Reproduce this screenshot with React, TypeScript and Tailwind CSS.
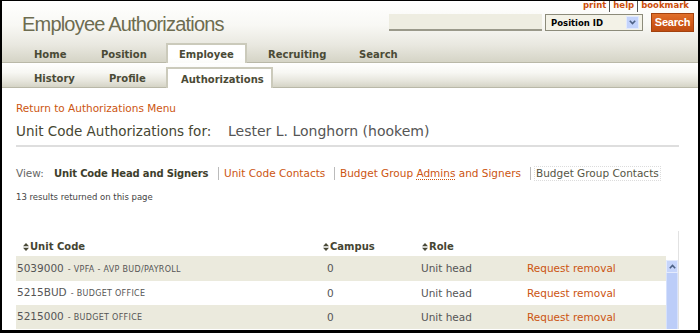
import React from "react";

function SortIcon() {
  return (
    <svg width="6" height="8" viewBox="0 0 6 8" className="inline-block mr-[1px]">
      <path d="M3 0 L6 3.3 L0 3.3 Z" fill="#4a4a38" />
      <path d="M3 8 L6 4.7 L0 4.7 Z" fill="#4a4a38" />
    </svg>
  );
}

function Sep() {
  return <span className="inline-block w-px h-[13px] bg-[#555] mx-[3px]" />;
}

function VSep() {
  return <span className="inline-block w-px h-[13px] bg-[#bbbbbb]" />;
}

const rows = [
  { code: "5039000", name: "- VPFA - AVP BUD/PAYROLL", bg: "bg-[#ebeadd]", h: "h-[25px]" },
  { code: "5215BUD", name: "- BUDGET OFFICE", bg: "bg-white", h: "h-[24px]" },
  { code: "5215000", name: "- BUDGET OFFICE", bg: "bg-[#ebeadd]", h: "h-[24px]" },
];

export default function App() {
  return (
    <div className="w-[700px] h-[333px] box-border border-black border-t border-l-2 border-r-2 border-b-[3px] bg-white overflow-hidden font-['DejaVu_Sans',Verdana,sans-serif] flex flex-col">
      {/* Header */}
      <div className="bg-[linear-gradient(to_bottom,#ffffff_0%,#f8f8f4_40%,#e9e8e0_72%,#d5d4c6_100%)] border-b border-[#b9b8a8]">
        <div className="h-[42px] flex justify-between">
          <div className="pl-[20px] pt-[11px] font-['Liberation_Sans',Arial,sans-serif] text-[20px] leading-[24px] tracking-[-0.8px] text-[#6d6c50] whitespace-nowrap">
            Employee Authorizations
          </div>
          <div className="flex flex-col items-end pr-[4px]">
            <div className="mt-[-1px] pr-[5px] h-[10px] text-[8.5px] leading-[10px] font-bold text-[#cc4e0c] flex items-center whitespace-nowrap">
              <span>print</span>
              <Sep />
              <span>help</span>
              <Sep />
              <span>bookmark</span>
            </div>
            <div className="flex mt-[3px] items-start">
              <div className="mt-[1px] w-[153px] h-[17px] bg-[#eeede1] border-b-2 border-[#9a998a]" />
              <div className="mt-[1px] ml-[3px] w-[98px] h-[17px] bg-[#f3f2e7] border border-[#8c8b7a] flex items-center justify-between pl-[5px] pr-[3px]">
                <span className="text-[8.5px] font-bold text-black leading-[10px]">Position ID</span>
                <span className="w-[13px] h-[13px] bg-[#c3d3fb] border border-[#e2eafd] flex items-center justify-center">
                  <svg width="7" height="5" viewBox="0 0 7 5">
                    <path d="M0.8 0.8 L3.5 3.6 L6.2 0.8" stroke="#4d6185" strokeWidth="1.6" fill="none" />
                  </svg>
                </span>
              </div>
              <div className="ml-[8px] w-[43px] h-[19px] bg-[linear-gradient(to_bottom,#e0702a_0%,#d25a1a_50%,#bf4d12_100%)] border border-[#a3420e] flex items-center justify-center text-white font-bold text-[11px] font-['Liberation_Sans',Arial,sans-serif] tracking-[-0.2px] leading-[13px]">
                Search
              </div>
            </div>
          </div>
        </div>
        {/* Tab row 1 */}
        <div className="h-[19px] flex items-end pl-[19px] text-[10px] font-bold text-[#4a4a36] leading-[13px] whitespace-nowrap">
          <div className="w-[66px] h-[19px] pl-[13px] pt-[5px]">Home</div>
          <div className="w-[79px] h-[19px] pl-[14px] pt-[5px]">Position</div>
          <div className="w-[81px] h-[20px] mb-[-1px] relative z-10 bg-[linear-gradient(to_bottom,#ffffff_0%,#ffffff_70%,#fbfbf8_100%)] border-2 border-b-0 border-[#cbcabb] pl-[11px] pt-[3px]">Employee</div>
          <div className="w-[99px] h-[19px] pl-[21px] pt-[5px]">Recruiting</div>
          <div className="w-[80px] h-[19px] pl-[13px] pt-[5px]">Search</div>
        </div>
      </div>
      {/* Tab row 2 */}
      <div className="h-[25px] bg-[linear-gradient(to_bottom,#ffffff_0%,#f7f7f3_40%,#e6e5dc_75%,#d5d4c6_100%)] border-b border-[#b9b8a8] flex items-end pl-[19px] text-[10px] font-bold text-[#4a4a36] leading-[13px] whitespace-nowrap">
        <div className="w-[75px] h-[21px] pl-[13px] pt-[6px]">History</div>
        <div className="w-[70px] h-[21px] pl-[13px] pt-[6px]">Profile</div>
        <div className="w-[107px] h-[21px] mb-[-1px] relative z-10 bg-white border-2 border-b-0 border-[#cbcabb] pl-[13px] pt-[4px]">Authorizations</div>
      </div>

      {/* Content */}
      <div className="pl-[14px] flex flex-col">
        <div className="mt-[14px] text-[10.5px] leading-[13px] text-[#cc5511] whitespace-nowrap">
          Return to Authorizations Menu
        </div>
        <div className="mt-[7px] flex items-baseline h-[18px] whitespace-nowrap">
          <div className="w-[212px] text-[13.5px] leading-[18px] text-[#464632]">Unit Code Authorizations for:</div>
          <div className="text-[14px] leading-[18px] text-[#555555]">Lester L. Longhorn (hookem)</div>
        </div>
        <div className="mt-[5px] w-[663px] h-[2px] bg-[#dedede]" />

        <div className="mt-[20px] flex items-center h-[13px] text-[10.5px] leading-[13px] whitespace-nowrap">
          <div className="w-[38px] text-[#666666]">View:</div>
          <div className="w-[164px] font-bold text-[10px] tracking-[-0.15px] text-[#3e3e2c]">Unit Code Head and Signers</div>
          <VSep />
          <div className="w-[115px] pl-[5px] text-[#cc5511]">Unit Code Contacts</div>
          <VSep />
          <div className="w-[195px] pl-[5px] text-[#cc5511]">
            Budget Group <span className="border-b border-dotted border-[#cc5511]">Admins</span> and Signers
          </div>
          <VSep />
          <div className="ml-[4px] px-[1px] outline outline-dotted outline-[#dcdcdc] text-[#555544]">Budget Group Contacts</div>
        </div>

        <div className="mt-[12px] text-[8.5px] leading-[11px] text-[#444444] whitespace-nowrap">
          13 results returned on this page
        </div>

        {/* Table */}
        <div className="mt-[28px] w-[663px] border-r border-[#e2e2e2] flex flex-col">
          <div className="h-[25px] flex pt-[6px] text-[10px] font-bold leading-[13px] text-[#454533] whitespace-nowrap">
            <div className="w-[306px] pl-[7px] flex items-center"><SortIcon />Unit Code</div>
            <div className="w-[99px] pl-[1px] flex items-center"><SortIcon />Campus</div>
            <div className="w-[100px] pl-[1px] flex items-center"><SortIcon />Role</div>
          </div>
          <div className="flex">
            <div className="w-[650px] flex flex-col">
              {rows.map((r) => (
                <div key={r.code + r.name} className={`${r.h} ${r.bg} flex items-center text-[10.5px] leading-[13px] text-[#555555] whitespace-nowrap`}>
                  <div className="w-[306px] pl-[1px] flex items-baseline">
                    <span>{r.code}</span>
                    <span className="ml-[4px] text-[8px] tracking-[0.3px] uppercase">{r.name}</span>
                  </div>
                  <div className="w-[99px] pl-[5px]">0</div>
                  <div className="w-[106px]">Unit head</div>
                  <div className="text-[#cc5511]">Request removal</div>
                </div>
              ))}
            </div>
            <div className="w-[12px] mt-[4px] flex flex-col">
              <div className="h-[13px] bg-[#c6d5fb] border border-[#e4ebfd] flex items-center justify-center">
                <svg width="7" height="5" viewBox="0 0 7 5">
                  <path d="M0.8 4.2 L3.5 1.4 L6.2 4.2" stroke="#4d6185" strokeWidth="1.6" fill="none" />
                </svg>
              </div>
              <div className="flex-1 bg-[#bccdf8] border-l border-r border-[#d6e1fc]" />
            </div>
          </div>
        </div>
      </div>
    </div>
  );
}
